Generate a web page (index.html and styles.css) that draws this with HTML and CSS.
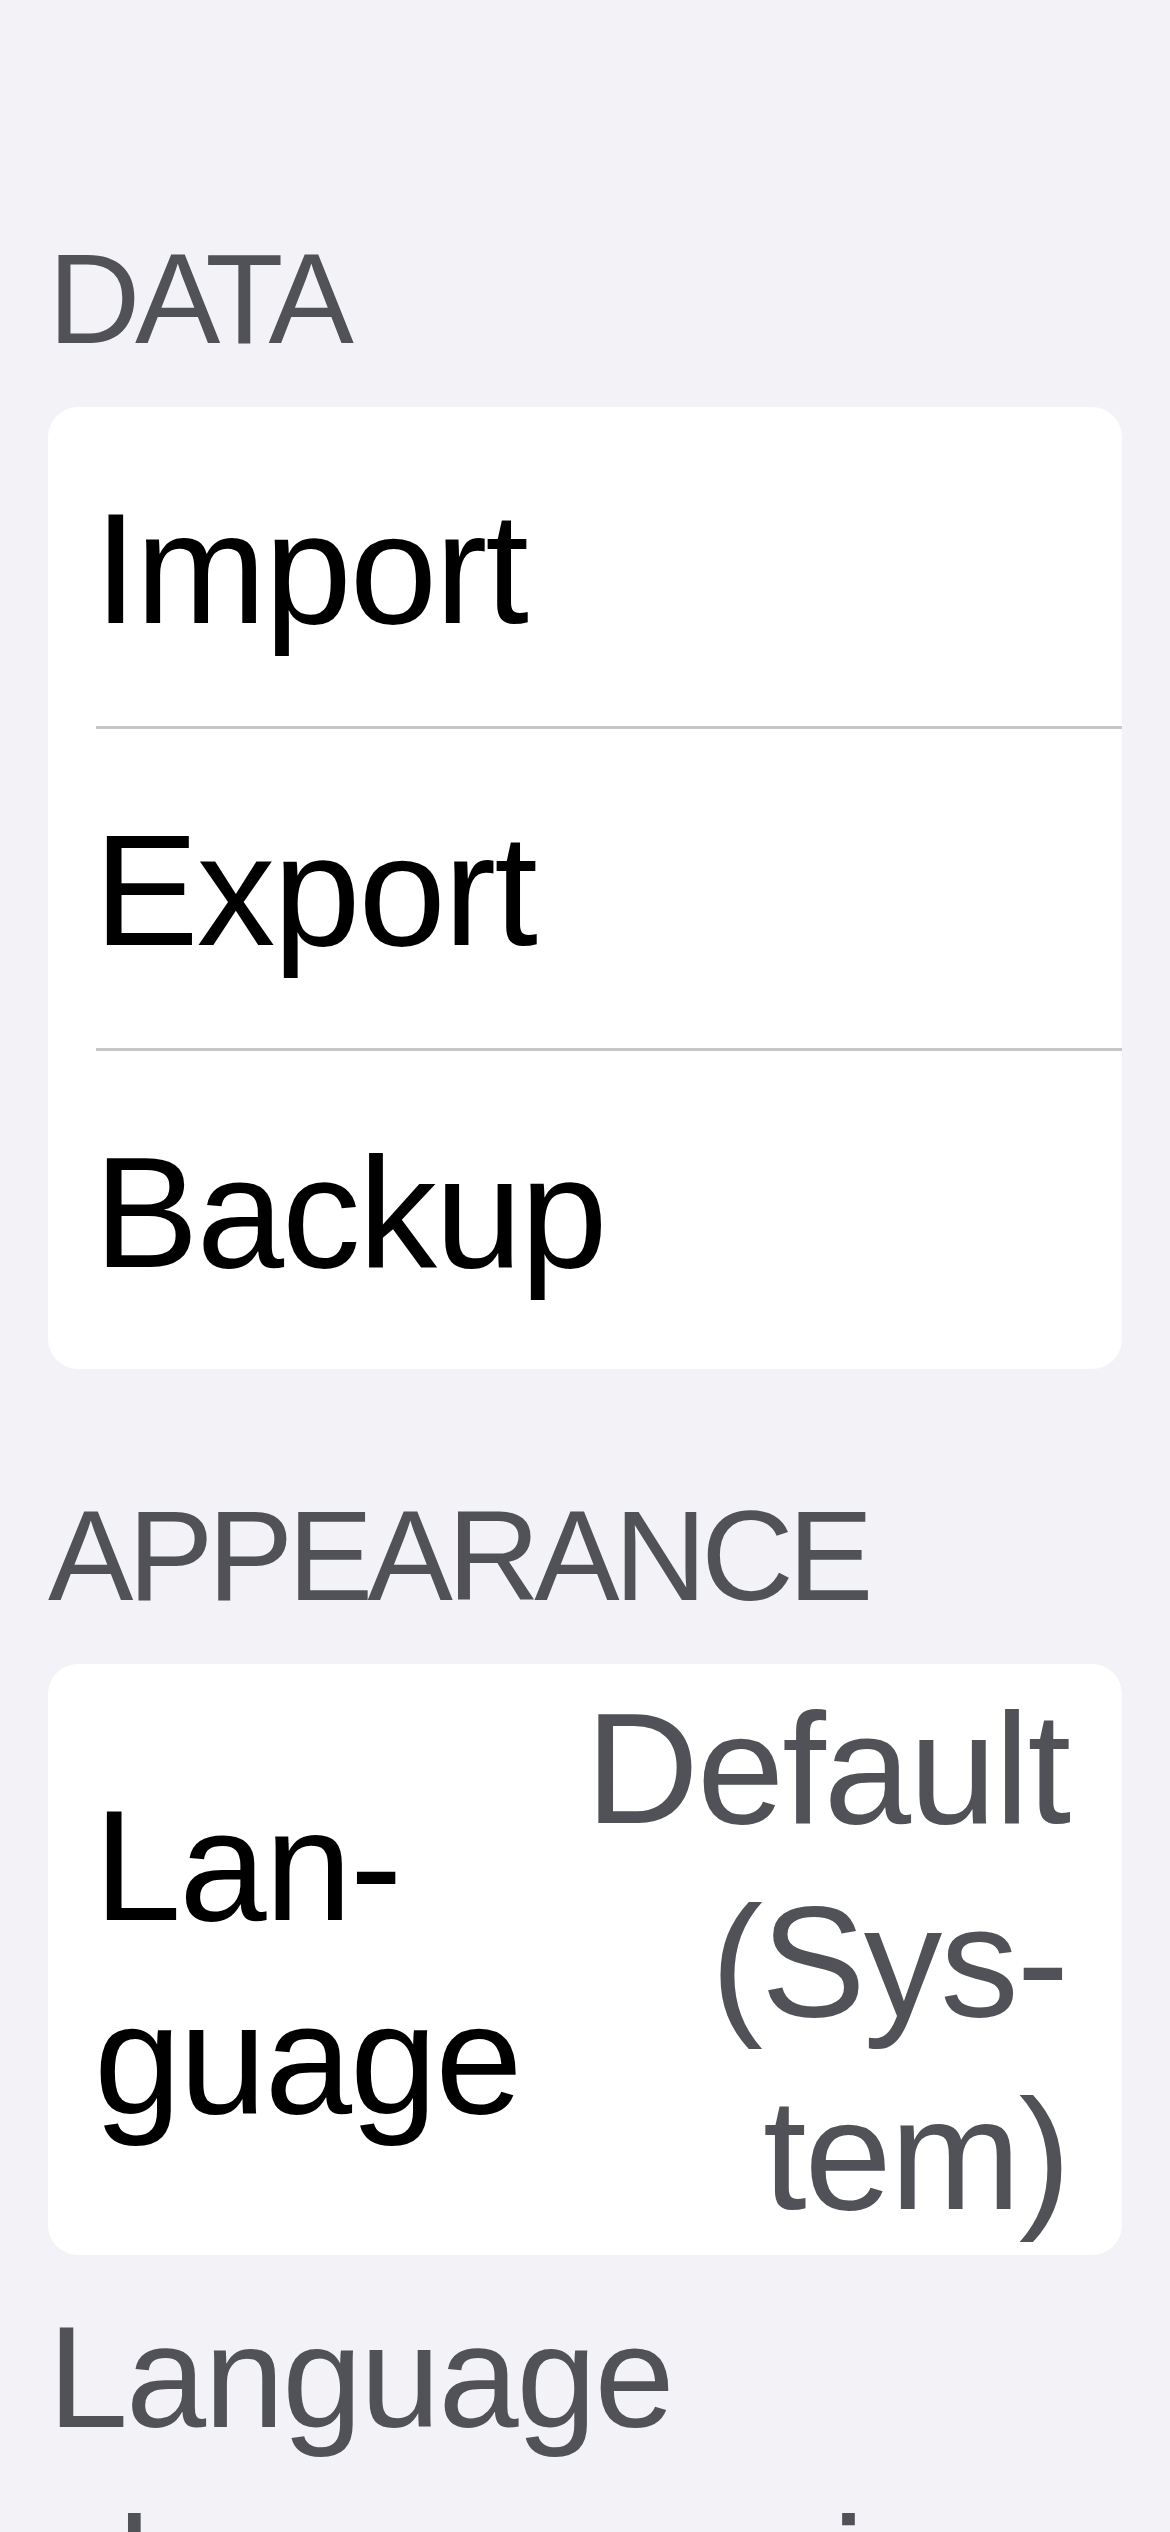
FILE: index.html
```html
<!DOCTYPE html>
<html lang="en">
<head>
<meta charset="utf-8">
<title>Settings</title>
<link rel="stylesheet" href="styles.css">
</head>
<body>
<main class="page">
  <section class="section">
    <h2 class="section-header">DATA</h2>
    <div class="card">
      <div class="row">Import</div>
      <div class="sep"></div>
      <div class="row">Export</div>
      <div class="sep"></div>
      <div class="row row-last">Backup</div>
    </div>
  </section>
  <section class="section section-appearance">
    <h2 class="section-header">APPEARANCE</h2>
    <div class="card">
      <div class="row row-labeled">
        <span class="label">Lan&shy;guage</span>
        <span class="value">Default (Sys&shy;tem)</span>
      </div>
    </div>
    <p class="section-footer">Language changes are in effect after the app restarts.</p>
  </section>
</main>
</body>
</html>
```
FILE: styles.css
```css
html, body {
  margin: 0;
  padding: 0;
  background: #f2f2f7;
}

body {
  font-family: "Liberation Sans", Arial, sans-serif;
  color: #000;
}

.page {
  height: 2532px;
  overflow: hidden;
  padding-top: 221px;
  box-sizing: border-box;
}

.section-header {
  margin: 0 48px 30px;
  font-size: 128px;
  line-height: 156px;
  font-weight: 400;
  color: #515158;
  letter-spacing: -5.5px;
}

.section-appearance {
  margin-top: 109px;
}

.card {
  margin: 0 48px;
  background: #fff;
  border-radius: 30px;
  overflow: hidden;
}

.row {
  padding: 65px 53px 61px 46px;
  font-size: 157px;
  line-height: 193px;
  letter-spacing: -2px;
  color: #000;
}

.row-last {
  padding-bottom: 60px;
}

.sep {
  height: 3px;
  margin-left: 48px;
  background: #c6c6c8;
}

.row-labeled {
  display: flex;
  align-items: center;
  justify-content: space-between;
  padding-top: 8px;
  padding-bottom: 4px;
}

.label {
  flex: 1 1 auto;
  min-width: 0;
}

.value {
  flex: 0 0 500px;
  text-align: right;
  color: #515158;
  letter-spacing: -2px;
}

.section-footer {
  margin: 27px 48px 0;
  font-size: 144px;
  line-height: 191px;
  color: #515158;
  letter-spacing: -2px;
  word-spacing: -12px;
}
```
